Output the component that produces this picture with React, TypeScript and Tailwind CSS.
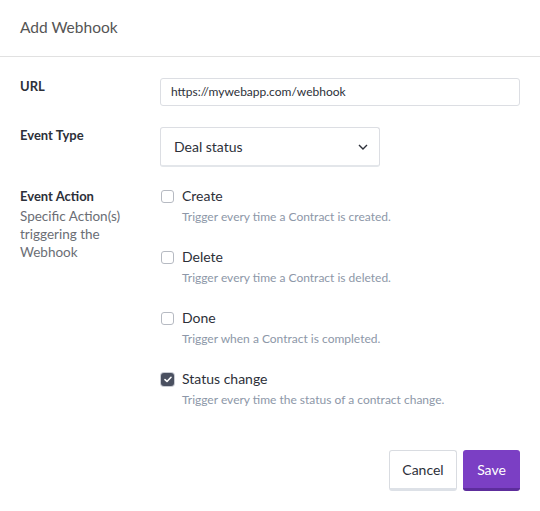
import React from "react";

const font = { fontFamily: "Lato, 'Open Sans', sans-serif" };

function Check({ checked }: { checked?: boolean }) {
  return checked ? (
    <span className="mt-[3px] flex h-[13px] w-[13px] shrink-0 items-center justify-center rounded-[3px] bg-[#4a5060] ring-1 ring-[#c9ccd3]">
      <svg width="8" height="7" viewBox="0 0 8 7">
        <path d="M1 3.6 L3 5.5 L7 1.3" stroke="white" strokeWidth="1.6" fill="none" strokeLinecap="round" strokeLinejoin="round" />
      </svg>
    </span>
  ) : (
    <span className="mt-[3px] h-[13px] w-[13px] shrink-0 rounded-[3px] border border-[#b6bac2] bg-white" />
  );
}

const actions = [
  { label: "Create", desc: "Trigger every time a Contract is created." },
  { label: "Delete", desc: "Trigger every time a Contract is deleted." },
  { label: "Done", desc: "Trigger when a Contract is completed." },
  { label: "Status change", desc: "Trigger every time the status of a contract change.", checked: true },
];

export default function App() {
  return (
    <div className="h-[511px] w-[540px] bg-white text-[#2d3039]" style={font}>
      <div className="flex h-[57px] items-center border-b border-[#e1e1e1] px-[20px] text-[15.5px] text-[#555]">
        Add Webhook
      </div>
      <div className="px-[20px] pt-[21px]">
        <div className="flex">
          <div className="w-[140px] pt-0 text-[13px] font-bold leading-[16px]">URL</div>
          <div className="flex h-[28px] flex-1 items-center rounded-[3px] border border-[#dcdee3] px-[10px] text-[12px]">
            https://mywebapp.com/webhook
          </div>
        </div>
        <div className="mt-[21px] flex">
          <div className="w-[140px] text-[13px] font-bold leading-[16px]">Event Type</div>
          <div className="flex h-[40px] w-[220px] items-center justify-between rounded-[3px] border border-b-2 border-[#dcdee3] border-b-[#e3e6ea] pl-[13px] pr-[11px] text-[14px]">
            <span>Deal status</span>
            <svg width="10" height="6" viewBox="0 0 10 6">
              <path d="M1 1 L5 5 L9 1" stroke="#2d3039" strokeWidth="1.4" fill="none" />
            </svg>
          </div>
        </div>
        <div className="mt-[20px] flex">
          <div className="w-[140px] text-[13px] leading-[18px]">
            <div className="font-bold">Event Action</div>
            <div className="mt-[2px] text-[13.5px] text-[#6b6e75]">
              Specific Action(s)
              <br />
              triggering the
              <br />
              Webhook
            </div>
          </div>
          <div className="flex flex-col gap-[23px] pl-[1px]">
            {actions.map((a) => (
              <div key={a.label} className="flex gap-[8px]">
                <Check checked={a.checked} />
                <div>
                  <div className="text-[14px] leading-[18px]">{a.label}</div>
                  <div className="mt-[3px] text-[12px] leading-[17px] text-[#8d97a8]">{a.desc}</div>
                </div>
              </div>
            ))}
          </div>
        </div>
        <div className="mt-[42px] flex justify-end gap-[6px]">
          <button className="h-[41px] w-[68px] rounded-[3px] border border-[#d9dce1] border-b-[3px] border-b-[#dde1e7] bg-white text-[14px] text-[#2d3039]">
            Cancel
          </button>
          <button className="h-[41px] w-[57px] rounded-[3px] border-b-[3px] border-b-[#5d2d9c] bg-[#7b3fc4] text-[14px] text-white">
            Save
          </button>
        </div>
      </div>
    </div>
  );
}
